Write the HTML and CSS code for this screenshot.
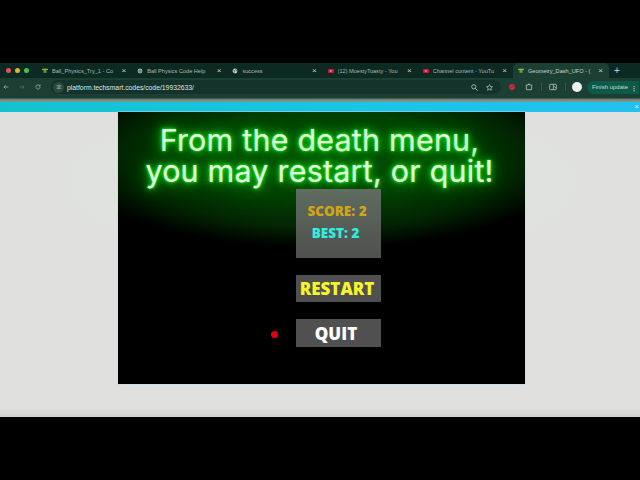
FILE: index.html
```html
<!DOCTYPE html>
<html lang="en">
<head>
<meta charset="utf-8">
<title>Geometry_Dash_UFO</title>
<link rel="stylesheet" href="styles.css">
</head>
<body>
<div class="screen">
  <div class="letterbox-top"></div>
  <div class="tabbar">
    <div class="lights"><i class="light red"></i><i class="light yellow"></i><i class="light green"></i></div>
    <div class="tab"><svg class="fav" viewBox="0 0 10 10"><path d="M1 2h8M1 2v1.5M9 2v1.5M3.6 2v6M6.4 2v6" fill="none" stroke="#b7e04a" stroke-width="1.4"/></svg><span class="tab-title">Ball_Physics_Try_1 - Co</span><span class="tab-x">×</span></div>
    <div class="tab"><svg class="fav" viewBox="0 0 10 10"><circle cx="5" cy="5" r="4" fill="#a9b8b0"/><path d="M1 5h8M5 1v8" stroke="#2a4038" stroke-width=".8"/></svg><span class="tab-title">Ball Physics Code Help</span><span class="tab-x">×</span></div>
    <div class="tab"><svg class="fav" viewBox="0 0 10 10"><circle cx="5" cy="5" r="4" fill="#c8d2cc"/><path d="M2 3l3 2-2 3M6 1.500l1 3 2 1" stroke="#20352d" stroke-width="1" fill="none"/></svg><span class="tab-title">success</span><span class="tab-x">×</span></div>
    <div class="tab"><svg class="fav" viewBox="0 0 10 10"><rect y="1.500" width="10" height="7" rx="2" fill="#d8123c"/><path d="M4 3.500l2.500 1.500L4 6.500z" fill="#fff"/></svg><span class="tab-title">(12) MoestyToasty - You</span><span class="tab-x">×</span></div>
    <div class="tab"><svg class="fav" viewBox="0 0 10 10"><rect y="1.500" width="10" height="7" rx="2" fill="#d8123c"/><path d="M4 3.500l2.500 1.500L4 6.500z" fill="#fff"/></svg><span class="tab-title">Channel content - YouTu</span><span class="tab-x">×</span></div>
    <div class="tab tab-active"><svg class="fav" viewBox="0 0 10 10"><path d="M1 2h8M1 2v1.5M9 2v1.5M3.6 2v6M6.4 2v6" fill="none" stroke="#b7e04a" stroke-width="1.4"/></svg><span class="tab-title">Geometry_Dash_UFO - (</span><span class="tab-x">×</span></div>
    <span class="new-tab">+</span>
  </div>
  <div class="toolbar">
    <svg class="nav" viewBox="0 0 10 10"><path d="M9 5H1.500M4.500 2L1.500 5l3 3" fill="none" stroke="#c5d0ca" stroke-width="1"/></svg>
    <svg class="nav" viewBox="0 0 10 10"><path d="M1 5h7.500M5.500 2l3 3-3 3" fill="none" stroke="#65786f" stroke-width="1"/></svg>
    <svg class="nav" viewBox="0 0 10 10"><path d="M8.500 5A3.500 3.500 0 1 1 7.500 2.500M8.500 1v2.500H6" fill="none" stroke="#c5d0ca" stroke-width="1"/></svg>
    <div class="omnibox">
      <span class="site-btn"><svg viewBox="0 0 10 10"><path d="M1 3h3M7 3h2M1 7h2M6 7h3" stroke="#d5ddd8" stroke-width="1"/><circle cx="5.500" cy="3" r="1.200" fill="none" stroke="#d5ddd8" stroke-width=".8"/><circle cx="4.500" cy="7" r="1.200" fill="none" stroke="#d5ddd8" stroke-width=".8"/></svg></span>
      <span class="url">platform.techsmart.codes/code/19932633/</span>
      <svg class="omni-icon" viewBox="0 0 10 10"><circle cx="4" cy="4" r="3" fill="none" stroke="#d5ddd8"/><path d="M6.300 6.300L9.500 9.500" stroke="#d5ddd8" stroke-width="1.200"/></svg>
      <svg class="omni-icon" viewBox="0 0 10 10"><path d="M5 .8l1.300 2.800 3 .3-2.300 2 .7 3L5 7.400 2.300 8.900l.7-3-2.300-2 3-.3z" fill="none" stroke="#d5ddd8" stroke-width=".9"/></svg>
    </div>
    <svg class="ext ext-first" viewBox="0 0 12 12"><circle cx="6" cy="6" r="5" fill="#8f2a2e"/><circle cx="6" cy="6" r="3" fill="none" stroke="#d8434a"/><path d="M3.500 3.500l5 5" stroke="#d8434a"/></svg>
    <svg class="ext" viewBox="0 0 12 12"><path d="M2 3h3V1.500h2V3h3v7H2z" fill="none" stroke="#d5ddd8"/></svg>
    <i class="sep"></i>
    <svg class="ext ext-side" viewBox="0 0 12 12"><rect x="1" y="2" width="10" height="8" rx="1" fill="none" stroke="#d5ddd8"/><path d="M6.500 2v8" stroke="#d5ddd8"/><path d="M8 5l2.500 3" stroke="#d5ddd8"/></svg>
    <i class="sep"></i>
    <i class="avatar"></i>
    <div class="update"><span>Finish update</span><b>⋮</b></div>
  </div>
  <div class="strip"></div>
  <div class="banner"><span class="banner-x">×</span></div>
  <main class="content">
    <div class="game">
      <h1 class="headline">From the death menu,<br>you may restart, or quit!</h1>
      <div class="menu">
        <i class="cursor"></i>
        <div class="score-card">
          <p class="score">SCORE: 2</p>
          <p class="best">BEST: 2</p>
        </div>
        <div class="btn restart">RESTART</div>
        <div class="btn quit">QUIT</div>
      </div>
    </div>
  </main>
  <div class="letterbox-bottom"></div>
</div>
</body>
</html>
```
FILE: styles.css
```css
* { box-sizing: border-box; }
html, body { margin: 0; width: 640px; height: 480px; overflow: hidden; background: #000; }
.screen { width: 640px; height: 480px; display: flex; flex-direction: column; font-family: "Liberation Sans", Arial, sans-serif; }
.letterbox-top { height: 63px; background: #000; }
.letterbox-bottom { height: 63px; background: #000; }

.tabbar { height: 15px; background: #0d2a22; display: flex; align-items: center; padding-left: 6px; }
.lights { display: flex; gap: 4px; width: 34px; flex: none; }
.light { width: 5px; height: 5px; border-radius: 50%; }
.red { background: #e0555a; }
.yellow { background: #dfb23c; }
.green { background: #3fc152; }
.tab { width: 95.200px; height: 15px; display: flex; align-items: center; gap: 4px; font-size: 5.600px; color: #a9b8b0; padding: 0 9px 0 2px; flex: none; }
.tab-active { width: 96px; margin-left: -3px; padding-left: 5px; padding-right: 6px; background: #1c3f33; border-radius: 5px 5px 0 0; color: #c9d6cf; }
.tab-title { flex: 1; white-space: nowrap; overflow: hidden; }
.tab-x { font-size: 8px; color: #c5d0ca; line-height: 1; }
.fav { width: 6px; height: 6px; flex: none; }
.new-tab { color: #c5d0ca; font-size: 10px; margin-left: 5px; line-height: 1; }

.toolbar { height: 18px; background: #1c3f33; display: flex; align-items: center; padding-left: 3px; }
.nav { width: 6px; height: 6px; margin-right: 10px; flex: none; }
.omnibox { width: 450px; height: 14px; background: #14332a; border-radius: 7px; display: flex; align-items: center; padding: 0 8px 0 2px; flex: none; }
.site-btn { width: 11px; height: 11px; border-radius: 50%; background: #29493d; display: flex; align-items: center; justify-content: center; flex: none; }
.site-btn svg { width: 6px; height: 6px; }
.url { font-size: 6.800px; color: #dfe7e2; margin-left: 3px; flex: 1; white-space: nowrap; }
.omni-icon { width: 7px; height: 7px; margin-left: 8px; flex: none; }
.ext { width: 8px; height: 8px; margin-left: 9px; flex: none; }
.ext-first { margin-left: 7px; }
.ext-side { margin-left: 7px; }
.sep { width: 1px; height: 8px; background: #3b5a4e; margin-left: 8px; flex: none; }
.avatar { width: 10px; height: 10px; border-radius: 50%; background: #eef1ee; margin-left: 6px; flex: none; }
.update { height: 13px; margin-left: 5px; background: #0d5a48; border-radius: 7px 0 0 7px; display: flex; align-items: center; justify-content: space-between; padding: 0 2px 0 5px; font-size: 6px; color: #c5dcd2; white-space: nowrap; flex: none; width: 52px; }

.strip { height: 6px; background: linear-gradient(#1c3f33 30%, #6a8076 55%, #8a9a92); }
.banner { height: 10px; background: linear-gradient(90deg, #12c3cf, #1cc4e6 60%, #22c0ee); display: flex; justify-content: flex-end; align-items: center; padding-right: 1px; }
.banner-x { color: #dff6fb; font-size: 8px; line-height: 1; }

.content { height: 305px; background: radial-gradient(ellipse 270px 90px at 322px 70px, #dae6da, rgba(224,225,223,0) 100%), linear-gradient(#e0e1df 97%, #d2d3d1); padding-left: 118px; }
.game { width: 407px; height: 272px; background: radial-gradient(ellipse 260px 92px at 50% 44px, #064506 0%, #053d05 50%, #022402 78%, #000 100%); background-color: #000; box-shadow: 0 0 0 .5px #bcdcf0; display: flex; flex-direction: column; align-items: center; overflow: hidden; }
.headline { margin: 13px 4px 0 0; font-family: Inter, "Liberation Sans", sans-serif; font-weight: 400; font-size: 30.400px; line-height: 31px; letter-spacing: .25px; color: #e4fde0; text-align: center; white-space: nowrap; text-shadow: 0 0 2px #35ff35, 0 0 5px #1ce81c, 0 0 10px #12c812, 0 0 18px #0aa80a, 0 0 28px #088a08; }
.menu { width: 85px; margin: 2px 0 0 0; position: relative; left: 17px; display: flex; flex-direction: column; font-family: "Open Sans", "Liberation Sans", sans-serif; font-weight: 800; }
.cursor { position: absolute; left: -25.500px; top: 142px; width: 7px; height: 7px; border-radius: 50%; background: #e00010; }
.score-card { height: 69px; background: linear-gradient(#5f6c5f, #4f504f); display: flex; flex-direction: column; align-items: center; padding: 13px 3px 0 0; }
.score, .best { margin: 0; font-size: 13.500px; line-height: 18px; }
.score { color: #d1a614; }
.best { color: #2ff0e0; margin: 4px 3px 0 0; }
.btn { height: 27px; background: #505050; display: flex; align-items: center; justify-content: center; padding-right: 3px; font-size: 17px; }
.restart { color: #f6f52a; margin-top: 17px; }
.quit { height: 28px; color: #fff; margin-top: 17px; padding-right: 5px; }
```
